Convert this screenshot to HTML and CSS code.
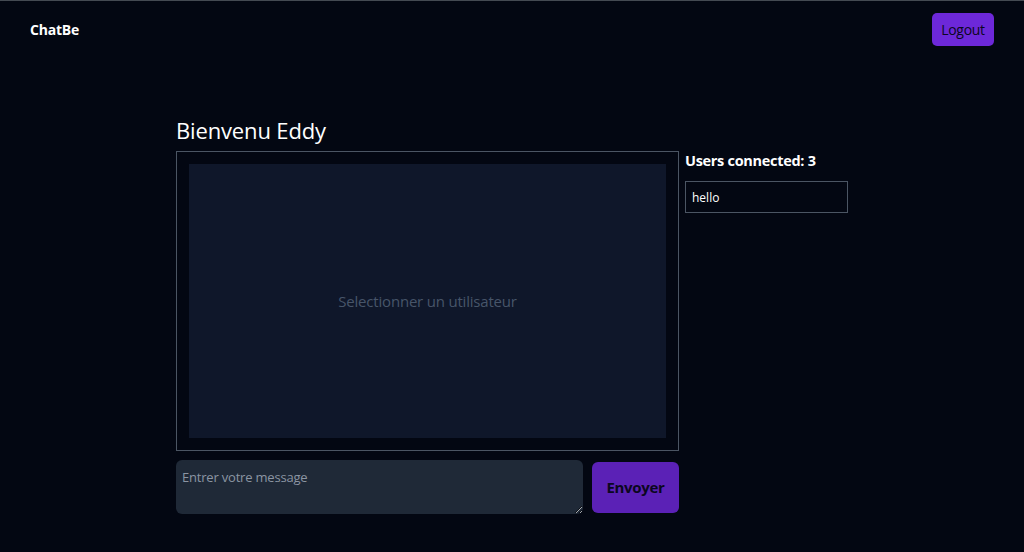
FILE: index.html
```html
<!DOCTYPE html>
<html lang="fr">
<head>
<meta charset="utf-8">
<title>ChatBe</title>
<link rel="stylesheet" href="styles.css">
</head>
<body>
<header class="topbar">
  <div class="brand">ChatBe</div>
  <button class="logout">Logout</button>
</header>
<main class="page">
  <h1 class="welcome">Bienvenu Eddy</h1>
  <div class="layout">
    <section class="chat">
      <div class="chat-frame">
        <div class="chat-inner">Selectionner un utilisateur</div>
      </div>
      <div class="composer">
        <textarea class="message" placeholder="Entrer votre message"></textarea>
        <button class="send">Envoyer</button>
      </div>
    </section>
    <aside class="users">
      <h2 class="users-title">Users connected: 3</h2>
      <div class="user-item">hello</div>
    </aside>
  </div>
</main>
</body>
</html>
```
FILE: styles.css
```css
html {
  background: #030712;
  border-top: 1px solid #444a52;
}
body {
  margin: 0;
  font-family: "Open Sans", "Noto Sans", sans-serif;
  color: #ffffff;
  background: #030712;
  min-height: 551px;
}
.topbar {
  display: flex;
  justify-content: space-between;
  align-items: center;
  height: 57px;
  padding: 0 30px;
}
.brand {
  font-weight: 700;
  font-size: 14px;
  letter-spacing: -0.2px;
}
.logout {
  background: #6d28d9;
  color: #0b0720;
  border: none;
  border-radius: 5px;
  width: 62px;
  height: 33px;
  font-family: inherit;
  font-size: 14px;
  padding: 0;
  letter-spacing: -0.3px;
}
.page {
  width: 672px;
  margin: 0 auto;
  padding-top: 56px;
}
.welcome {
  margin: 0 0 5px;
  font-size: 22px;
  font-weight: 500;
  line-height: 32px;
  letter-spacing: -0.15px;
}
.layout {
  display: flex;
  gap: 6px;
}
.chat {
  width: 503px;
}
.chat-frame {
  box-sizing: border-box;
  border: 1px solid #4b5563;
  height: 300px;
  padding: 12px;
}
.chat-inner {
  background: #0f172a;
  height: 100%;
  display: flex;
  align-items: center;
  justify-content: center;
  color: #475569;
  font-size: 15px;
  font-weight: 500;
  letter-spacing: -0.2px;
}
.composer {
  display: flex;
  align-items: center;
  gap: 9px;
  margin-top: 9px;
}
.message {
  width: 407px;
  height: 54px;
  box-sizing: border-box;
  background: #1f2937;
  border: none;
  border-radius: 6px;
  padding: 8px 6px 6px;
  color: #fff;
  font-family: inherit;
  font-size: 13px;
  letter-spacing: -0.2px;
  resize: vertical;
  outline: none;
}
.message::placeholder {
  color: #8b95a3;
}
.send {
  width: 87px;
  height: 51px;
  background: #5b21b6;
  color: #0b0720;
  border: none;
  border-radius: 6px;
  font-family: inherit;
  font-weight: 700;
  font-size: 15px;
  padding: 0;
  letter-spacing: -0.3px;
}
.users {
  width: 163px;
}
.users-title {
  margin: 0;
  font-size: 14.5px;
  font-weight: 700;
  line-height: 20px;
  letter-spacing: -0.3px;
}
.user-item {
  margin-top: 10px;
  border: 1px solid #4b5563;
  height: 30px;
  display: flex;
  align-items: center;
  padding: 0 6px;
  font-size: 12px;
}
```
